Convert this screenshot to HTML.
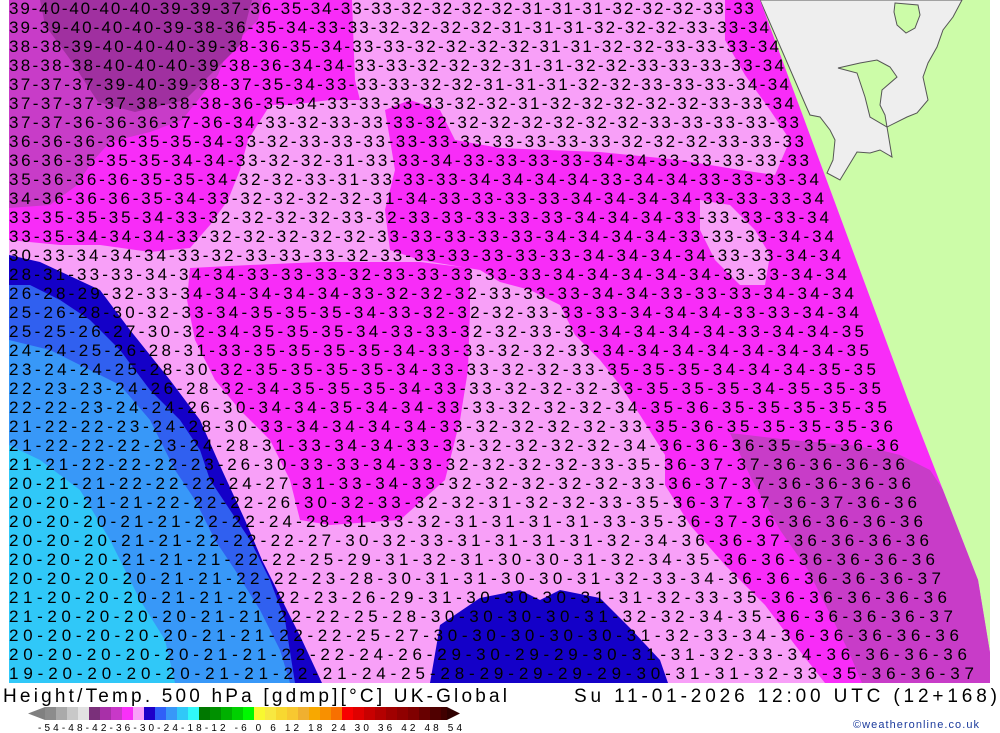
<!DOCTYPE html>
<html><head><meta charset="utf-8"><style>
html,body{margin:0;padding:0;background:#fff;width:1000px;height:733px;overflow:hidden}
svg{display:block}
.m text{font-family:"Liberation Sans",sans-serif;font-size:17px;fill:#000}
</style></head><body>
<svg width="1000" height="733" viewBox="0 0 1000 733" xmlns="http://www.w3.org/2000/svg">
<rect x="0" y="0" width="1000" height="733" fill="#fff"/>
<rect x="760" y="0" width="230" height="683" fill="#ccfca8"/>
<polygon fill="#eeeeee" stroke="#555" stroke-width="1" points="760,0 962,0 953,17 943,30 937,47 928,63 923,77 928,100 917,113 907,117 887,127 892,157 880,150 870,153 857,152 840,180 827,173 833,160 835,140 830,130 820,117 810,115 806,106"/>
<polygon fill="#ccfca8" stroke="#555" stroke-width="1" points="838,68 860,63 877,60 890,67 897,77 882,90 880,105 885,115 887,127 870,117 865,97 857,73"/>
<polygon fill="#ccfca8" stroke="#555" stroke-width="1" points="895,3 918,5 920,15 915,28 906,33 897,25 894,12"/>
<polygon fill="#f8a0f8" points="9,0 760,0 908,400 978,580 995,683 9,683"/>
<clipPath id="mc"><polygon points="9,0 760,0 908,400 978,580 995,683 9,683"/></clipPath>
<g clip-path="url(#mc)">
<polygon fill="#f82cf8" points="9,0 352,0 355,80 360,100 330,100 290,105 270,105 248,140 240,170 228,200 210,225 190,248 150,252 100,245 60,245 9,240"/>
<polygon fill="#f82cf8" points="725,0 1017,0 1017,683 825,683 795,645 765,605 725,565 690,525 665,485 665,455 640,415 620,385 600,360 575,335 560,305 530,290 500,282 480,270 420,260 390,250 385,210 395,170 390,140 385,110 410,100 440,110 455,140 500,148 600,152 680,160 740,170 775,175 790,140 770,110 745,75 725,40"/>
<polygon fill="#f8a0f8" points="700,200 730,205 755,230 770,255 765,285 740,285 715,260 700,230"/>
<polygon fill="#f82cf8" points="190,268 250,265 320,262 420,262 470,268 470,310 468,370 460,420 445,480 400,520 330,525 300,520 290,480 270,440 240,410 215,380 195,340 187,300"/>
<polygon fill="#c83cc8" points="9,0 262,0 258,20 228,50 218,75 198,100 182,120 150,132 110,142 92,162 76,186 50,205 9,208"/>
<polygon fill="#a030a0" points="40,0 252,0 240,45 210,75 185,100 135,112 98,102 72,62 45,25"/>
<polygon fill="#c83cc8" points="730,433 790,440 850,445 880,450 900,455 930,470 950,500 1017,683 862,683 848,650 828,610 808,570 780,530 752,480"/>
<polygon fill="#1400c8" points="9,255 40,262 100,290 130,330 170,380 200,420 222,470 245,520 262,560 282,600 302,640 322,683 9,683"/>
<polygon fill="#3060f0" points="9,285 30,285 60,300 90,320 120,350 150,390 180,420 200,450 210,480 230,510 250,540 270,580 285,620 295,683 9,683"/>
<polygon fill="#3898f8" points="9,340 50,350 90,370 120,385 150,420 175,470 195,500 215,540 235,570 260,610 280,650 290,683 9,683"/>
<polygon fill="#30c8f8" points="9,445 40,460 80,490 110,540 140,600 165,640 175,683 9,683"/>
<polygon fill="#1400c8" points="430,683 440,625 480,598 520,590 540,600 560,590 600,598 630,628 660,660 668,683"/>
</g>
<rect x="990" y="0" width="10" height="683" fill="#fff"/>
<g class="m">
<text x="9" y="14" textLength="745" lengthAdjust="spacing">39-40-40-40-40-39-39-37-36-35-34-33-33-32-32-32-32-31-31-31-32-32-32-33-33</text>
<text x="9" y="33" textLength="760" lengthAdjust="spacing">39-39-40-40-40-39-38-36-35-34-33-33-32-32-32-32-31-31-31-32-32-32-33-33-34</text>
<text x="9" y="52" textLength="770" lengthAdjust="spacing">38-38-39-40-40-40-39-38-36-35-34-33-33-32-32-32-32-31-31-32-32-33-33-33-34</text>
<text x="9" y="71" textLength="775" lengthAdjust="spacing">38-38-38-40-40-40-39-38-36-34-34-33-33-32-32-32-31-31-32-32-33-33-33-33-34</text>
<text x="9" y="90" textLength="780" lengthAdjust="spacing">37-37-37-39-40-39-38-37-35-34-33-33-33-32-32-31-31-31-32-32-33-33-33-34-34</text>
<text x="9" y="109" textLength="785" lengthAdjust="spacing">37-37-37-37-38-38-38-36-35-34-33-33-33-33-32-32-31-32-32-32-32-32-33-33-34</text>
<text x="9" y="128" textLength="790" lengthAdjust="spacing">37-37-36-36-36-37-36-34-33-32-33-33-33-32-32-32-32-32-32-32-33-33-33-33-33</text>
<text x="9" y="147" textLength="795" lengthAdjust="spacing">36-36-36-36-35-35-34-33-32-33-33-33-33-33-33-33-33-33-33-32-32-32-33-33-33</text>
<text x="9" y="166" textLength="800" lengthAdjust="spacing">36-36-35-35-35-34-34-33-32-32-31-33-33-34-33-33-33-33-34-34-33-33-33-33-33</text>
<text x="9" y="185" textLength="810" lengthAdjust="spacing">35-36-36-36-35-35-34-32-32-33-31-33-33-33-34-34-34-34-33-34-34-33-33-33-34</text>
<text x="9" y="204" textLength="815" lengthAdjust="spacing">34-36-36-36-35-34-33-32-32-32-32-31-34-33-33-33-33-34-34-34-34-33-33-33-34</text>
<text x="9" y="223" textLength="820" lengthAdjust="spacing">33-35-35-35-34-33-32-32-32-32-33-32-33-33-33-33-33-34-34-34-33-33-33-33-34</text>
<text x="9" y="242" textLength="825" lengthAdjust="spacing">33-35-34-34-34-33-32-32-32-32-32-33-33-33-33-33-34-34-34-34-33-33-33-34-34</text>
<text x="9" y="261" textLength="832" lengthAdjust="spacing">30-33-34-34-34-33-32-33-33-33-32-33-33-33-33-33-33-34-34-34-34-33-33-34-34</text>
<text x="9" y="280" textLength="838" lengthAdjust="spacing">28-31-33-33-34-34-34-33-33-33-32-33-33-33-33-33-34-34-34-34-34-33-33-34-34</text>
<text x="9" y="299" textLength="845" lengthAdjust="spacing">26-28-29-32-33-34-34-34-34-34-33-32-32-32-33-33-33-34-34-33-33-33-34-34-34</text>
<text x="9" y="318" textLength="850" lengthAdjust="spacing">25-26-28-30-32-33-34-35-35-35-34-33-32-32-32-33-33-33-34-34-34-33-33-34-34</text>
<text x="9" y="337" textLength="855" lengthAdjust="spacing">25-25-26-27-30-32-34-35-35-35-34-33-33-32-32-33-33-34-34-34-34-33-34-34-35</text>
<text x="9" y="356" textLength="860" lengthAdjust="spacing">24-24-25-26-28-31-33-35-35-35-35-34-33-33-32-32-33-34-34-34-34-34-34-34-35</text>
<text x="9" y="375" textLength="867" lengthAdjust="spacing">23-24-24-25-28-30-32-35-35-35-35-34-33-33-32-32-33-35-35-35-34-34-34-35-35</text>
<text x="9" y="394" textLength="872" lengthAdjust="spacing">22-23-23-24-26-28-32-34-35-35-35-34-33-33-32-32-32-33-35-35-35-34-35-35-35</text>
<text x="9" y="413" textLength="878" lengthAdjust="spacing">22-22-23-24-24-26-30-34-34-35-34-34-33-33-32-32-32-34-35-36-35-35-35-35-35</text>
<text x="9" y="432" textLength="884" lengthAdjust="spacing">21-22-22-23-24-28-30-33-34-34-34-34-33-32-32-32-32-33-35-36-35-35-35-35-36</text>
<text x="9" y="451" textLength="890" lengthAdjust="spacing">21-22-22-22-23-24-28-31-33-34-34-33-33-32-32-32-32-34-36-36-36-35-35-36-36</text>
<text x="9" y="470" textLength="896" lengthAdjust="spacing">21-21-22-22-22-23-26-30-33-33-34-33-32-32-32-32-33-35-36-37-37-36-36-36-36</text>
<text x="9" y="489" textLength="902" lengthAdjust="spacing">20-21-21-22-22-22-24-27-31-33-34-33-32-32-32-32-32-33-36-37-37-36-36-36-36</text>
<text x="9" y="508" textLength="908" lengthAdjust="spacing">20-20-21-21-22-22-22-26-30-32-33-32-32-31-32-32-33-35-36-37-37-36-37-36-36</text>
<text x="9" y="527" textLength="914" lengthAdjust="spacing">20-20-20-21-21-22-22-24-28-31-33-32-31-31-31-31-33-35-36-37-36-36-36-36-36</text>
<text x="9" y="546" textLength="920" lengthAdjust="spacing">20-20-20-21-21-22-22-22-27-30-32-33-31-31-31-31-32-34-36-36-37-36-36-36-36</text>
<text x="9" y="565" textLength="926" lengthAdjust="spacing">20-20-20-21-21-21-22-22-25-29-31-32-31-30-30-31-32-34-35-36-36-36-36-36-36</text>
<text x="9" y="584" textLength="932" lengthAdjust="spacing">20-20-20-20-21-21-22-22-23-28-30-31-31-30-30-31-32-33-34-36-36-36-36-36-37</text>
<text x="9" y="603" textLength="938" lengthAdjust="spacing">21-20-20-20-21-21-22-22-23-26-29-31-30-30-30-31-31-32-33-35-36-36-36-36-36</text>
<text x="9" y="622" textLength="944" lengthAdjust="spacing">21-20-20-20-20-21-21-22-22-25-28-30-30-30-30-31-32-32-34-35-36-36-36-36-37</text>
<text x="9" y="641" textLength="950" lengthAdjust="spacing">20-20-20-20-20-21-21-22-22-25-27-30-30-30-30-30-31-32-33-34-36-36-36-36-36</text>
<text x="9" y="660" textLength="958" lengthAdjust="spacing">20-20-20-20-20-21-21-22-22-24-26-29-30-29-29-30-31-31-32-33-34-36-36-36-36</text>
<text x="9" y="679" textLength="965" lengthAdjust="spacing">19-20-20-20-20-21-21-22-21-24-25-28-29-29-29-29-30-31-31-32-33-35-36-36-37</text>
</g>
<rect x="0" y="683" width="1000" height="50" fill="#fff"/>
<text x="3" y="702" textLength="504" lengthAdjust="spacing" font-family="'Liberation Sans',sans-serif" font-size="19" fill="#000">Height/Temp. 500 hPa [gdmp][°C] UK-Global</text>
<text x="574" y="702" textLength="423" lengthAdjust="spacing" font-family="'Liberation Sans',sans-serif" font-size="19" fill="#000">Su 11-01-2026 12:00 UTC (12+168)</text>
<polygon points="28,713.5 45,707 45,720" fill="#808080"/>
<g>
<rect x="45" y="707" width="11" height="13" fill="#8c8c8c"/>
<rect x="56" y="707" width="11" height="13" fill="#aaaaaa"/>
<rect x="67" y="707" width="11" height="13" fill="#c8c8c8"/>
<rect x="78" y="707" width="11" height="13" fill="#e2e2e2"/>
<rect x="89" y="707" width="11" height="13" fill="#7a307a"/>
<rect x="100" y="707" width="11" height="13" fill="#a830a8"/>
<rect x="111" y="707" width="11" height="13" fill="#c838c8"/>
<rect x="122" y="707" width="11" height="13" fill="#f830f8"/>
<rect x="133" y="707" width="11" height="13" fill="#f8a0f8"/>
<rect x="144" y="707" width="11" height="13" fill="#1e00c8"/>
<rect x="155" y="707" width="11" height="13" fill="#3060f8"/>
<rect x="166" y="707" width="11" height="13" fill="#3898f8"/>
<rect x="177" y="707" width="11" height="13" fill="#30c8f8"/>
<rect x="188" y="707" width="11" height="13" fill="#30f8f8"/>
<rect x="199" y="707" width="11" height="13" fill="#007800"/>
<rect x="210" y="707" width="11" height="13" fill="#009000"/>
<rect x="221" y="707" width="11" height="13" fill="#00b000"/>
<rect x="232" y="707" width="11" height="13" fill="#00d000"/>
<rect x="243" y="707" width="11" height="13" fill="#00f800"/>
<rect x="254" y="707" width="11" height="13" fill="#f8f830"/>
<rect x="265" y="707" width="11" height="13" fill="#f8e840"/>
<rect x="276" y="707" width="11" height="13" fill="#f8d830"/>
<rect x="287" y="707" width="11" height="13" fill="#f8c830"/>
<rect x="298" y="707" width="11" height="13" fill="#f0b030"/>
<rect x="309" y="707" width="11" height="13" fill="#f8a800"/>
<rect x="320" y="707" width="11" height="13" fill="#f89000"/>
<rect x="331" y="707" width="11" height="13" fill="#f87000"/>
<rect x="342" y="707" width="11" height="13" fill="#f80000"/>
<rect x="353" y="707" width="11" height="13" fill="#e00000"/>
<rect x="364" y="707" width="11" height="13" fill="#c80000"/>
<rect x="375" y="707" width="11" height="13" fill="#b40000"/>
<rect x="386" y="707" width="11" height="13" fill="#a00000"/>
<rect x="397" y="707" width="11" height="13" fill="#900000"/>
<rect x="408" y="707" width="11" height="13" fill="#800000"/>
<rect x="419" y="707" width="11" height="13" fill="#680000"/>
<rect x="430" y="707" width="11" height="13" fill="#500000"/>
<rect x="441" y="707" width="6" height="13" fill="#400000"/>
</g>
<polygon points="447,707 460,713.5 447,720" fill="#300000"/>
<text x="38" y="731" textLength="424" lengthAdjust="spacing" font-family="'Liberation Sans',sans-serif" font-size="10" fill="#000">-54-48-42-36-30-24-18-12 -6  0  6  12  18  24  30  36  42  48  54</text>
<text x="853" y="728" textLength="126" lengthAdjust="spacing" font-family="'Liberation Sans',sans-serif" font-size="11" fill="#1a3a9c">©weatheronline.co.uk</text>
</svg>
</body></html>
